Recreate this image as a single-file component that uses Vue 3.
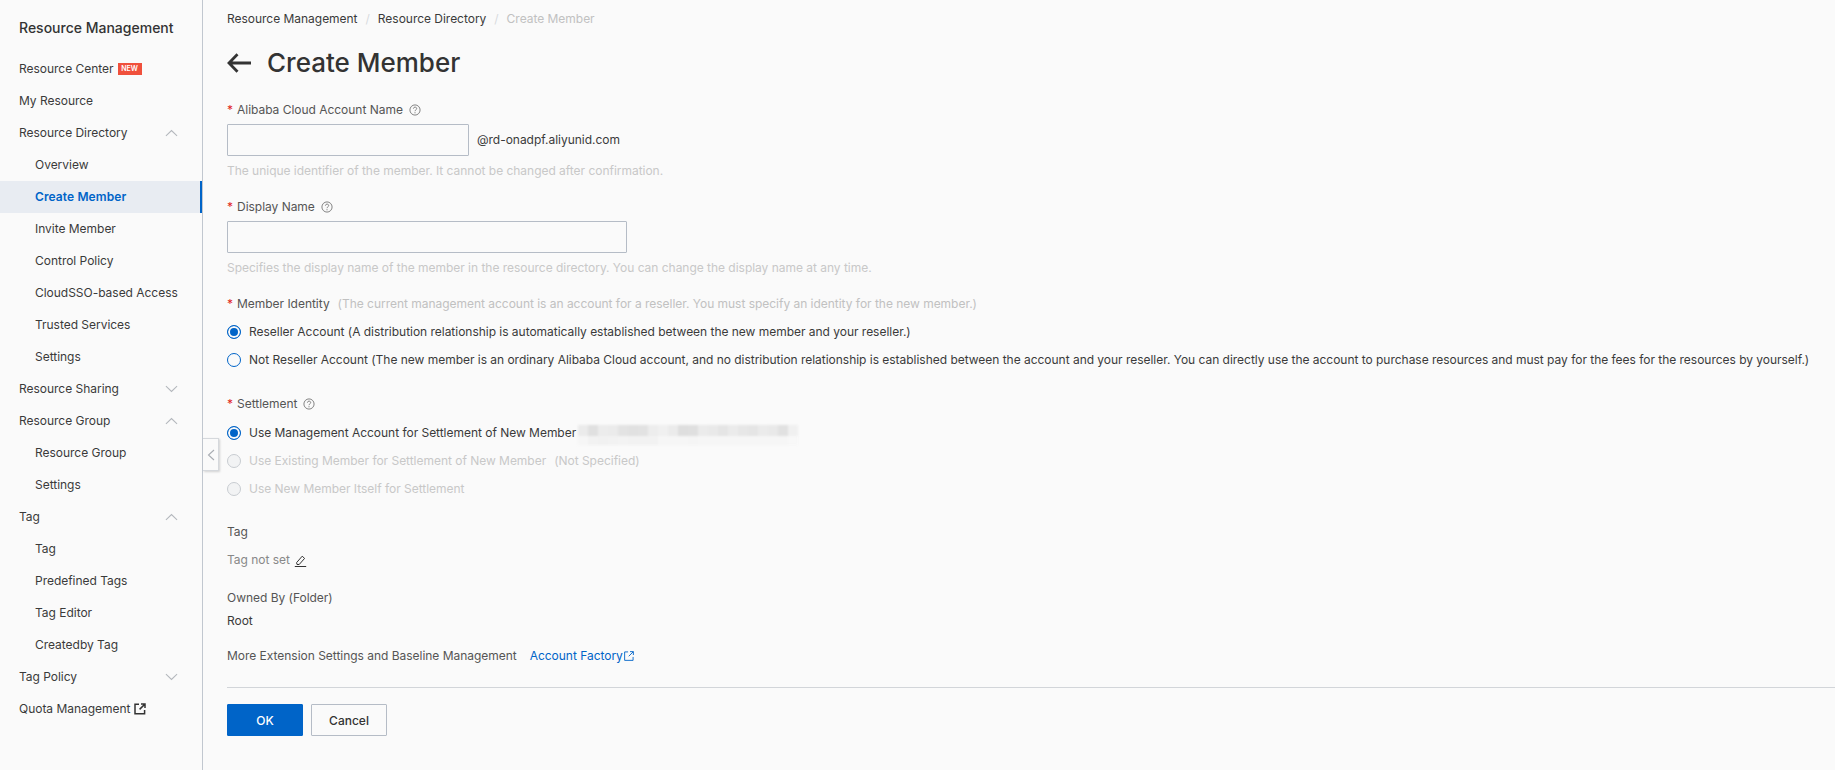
<template>
  <div class="page">
    <aside class="sidebar">
      <h2 class="side-title">Resource Management</h2>
      <nav class="menu">
        <a
          v-for="item in menu"
          :key="item.key"
          class="menu-item"
          :class="{ child: item.child, active: item.active }"
        >
          <span class="menu-text">{{ item.label }}</span>
          <em v-if="item.badge" class="badge">NEW</em>
          <svg v-if="item.external" class="side-ext" viewBox="0 0 12 12" width="12" height="12" fill="none" stroke="#333" stroke-width="1.5">
            <path d="M5 1.2H1v9.6h9.6V7" />
            <path d="M7 1h4v4M11 1L5.6 6.4" />
          </svg>
          <svg v-if="item.arrow" class="chevron" viewBox="0 0 14 8" width="13" height="8" fill="none" stroke="#b4b8bd" stroke-width="1.2">
            <path :d="item.arrow === 'up' ? 'M1 7l6-5.6L13 7' : 'M1 1l6 5.6L13 1'" />
          </svg>
        </a>
      </nav>
      <button class="collapse" type="button" aria-label="Collapse">
        <svg viewBox="0 0 8 12" width="8" height="12" fill="none" stroke="#a8acb2" stroke-width="1.1">
          <path d="M7 1L1.5 6 7 11" />
        </svg>
      </button>
    </aside>

    <main class="main">
      <div class="crumbs">
        <span>Resource Management</span>
        <i>/</i>
        <span>Resource Directory</span>
        <i>/</i>
        <span class="current">Create Member</span>
      </div>

      <div class="heading">
        <svg viewBox="0 0 24 20" width="24" height="20" fill="none" stroke="#333" stroke-width="2.8">
          <path d="M10.5 1.2L2 10l8.5 8.8M2.4 10H24" />
        </svg>
        <h1>Create Member</h1>
      </div>

      <section class="field field-account">
        <label class="label"><b>*</b>Alibaba Cloud Account Name<svg class="help" viewBox="0 0 12 12" width="12" height="12"><circle cx="6" cy="6" r="5.1" /><path d="M4.4 4.7c0-2.1 3.3-2.1 3.3-.1 0 1.2-1.7 1.3-1.7 2.6" /><path d="M6 8.2v1.1" /></svg></label>
        <div class="inline">
          <input class="input input-short" type="text" />
          <span class="suffix">@rd-onadpf.aliyunid.com</span>
        </div>
        <p class="hint">The unique identifier of the member. It cannot be changed after confirmation.</p>
      </section>

      <section class="field field-display">
        <label class="label"><b>*</b>Display Name<svg class="help" viewBox="0 0 12 12" width="12" height="12"><circle cx="6" cy="6" r="5.1" /><path d="M4.4 4.7c0-2.1 3.3-2.1 3.3-.1 0 1.2-1.7 1.3-1.7 2.6" /><path d="M6 8.2v1.1" /></svg></label>
        <input class="input input-long" type="text" />
        <p class="hint">Specifies the display name of the member in the resource directory. You can change the display name at any time.</p>
      </section>

      <section class="field field-identity">
        <label class="label"><b>*</b>Member Identity<span class="label-note">(The current management account is an account for a reseller. You must specify an identity for the new member.)</span></label>
        <div class="radios">
          <div class="radio checked"><span class="dot"></span>Reseller Account (A distribution relationship is automatically established between the new member and your reseller.)</div>
          <div class="radio"><span class="dot"></span>Not Reseller Account (The new member is an ordinary Alibaba Cloud account, and no distribution relationship is established between the account and your reseller. You can directly use the account to purchase resources and must pay for the fees for the resources by yourself.)</div>
        </div>
      </section>

      <section class="field field-settlement">
        <label class="label"><b>*</b>Settlement<svg class="help" viewBox="0 0 12 12" width="12" height="12"><circle cx="6" cy="6" r="5.1" /><path d="M4.4 4.7c0-2.1 3.3-2.1 3.3-.1 0 1.2-1.7 1.3-1.7 2.6" /><path d="M6 8.2v1.1" /></svg></label>
        <div class="radios radios-settlement">
          <div class="radio checked">
            <span class="dot"></span>Use Management Account for Settlement of New Member
            <span class="redacted">
              <span class="band band-top">
                <i v-for="(shade, n) in topBand" :key="n" :style="{ background: shade }"></i>
              </span>
              <span class="band band-bottom">
                <i v-for="(shade, n) in bottomBand" :key="n" :style="{ background: shade }"></i>
              </span>
            </span>
          </div>
          <div class="radio disabled"><span class="dot"></span>Use Existing Member for Settlement of New Member<span class="not-set">(Not Specified)</span></div>
          <div class="radio disabled"><span class="dot"></span>Use New Member Itself for Settlement</div>
        </div>
      </section>

      <section class="plain tag-block">
        <div class="plain-label">Tag</div>
        <div class="tag-empty">Tag not set
          <svg viewBox="0 0 13 13" width="13" height="13" fill="none" stroke="#333" stroke-width="1">
            <path d="M2.6 8.6L8.2 2.2l2.4 2.2-5.4 6.1H3z" />
            <path d="M.8 12.5h11.4" />
          </svg>
        </div>
      </section>

      <section class="plain owner-block">
        <div class="plain-label">Owned By (Folder)</div>
        <div class="plain-value">Root</div>
      </section>

      <section class="plain more-block">
        <span class="plain-label">More Extension Settings and Baseline Management</span>
        <a class="link">Account Factory<svg viewBox="0 0 11 11" width="10" height="10" fill="none" stroke="#0064c8" stroke-width="1"><path d="M4.5 1H.7v9.3H10V6.5" /><path d="M6.6.7h3.7v3.7M10.2.8L5.2 5.8" /></svg></a>
      </section>

      <footer class="actions">
        <button class="btn primary" type="button">OK</button>
        <button class="btn" type="button">Cancel</button>
      </footer>
    </main>
  </div>
</template>

<script setup>
const menu = [
  { key: 'center', label: 'Resource Center', badge: true },
  { key: 'mine', label: 'My Resource' },
  { key: 'dir', label: 'Resource Directory', arrow: 'up' },
  { key: 'overview', label: 'Overview', child: true },
  { key: 'create', label: 'Create Member', child: true, active: true },
  { key: 'invite', label: 'Invite Member', child: true },
  { key: 'policy', label: 'Control Policy', child: true },
  { key: 'sso', label: 'CloudSSO-based Access', child: true },
  { key: 'trusted', label: 'Trusted Services', child: true },
  { key: 'dirset', label: 'Settings', child: true },
  { key: 'share', label: 'Resource Sharing', arrow: 'down' },
  { key: 'group', label: 'Resource Group', arrow: 'up' },
  { key: 'groupitem', label: 'Resource Group', child: true },
  { key: 'groupset', label: 'Settings', child: true },
  { key: 'tag', label: 'Tag', arrow: 'up' },
  { key: 'tagitem', label: 'Tag', child: true },
  { key: 'predefined', label: 'Predefined Tags', child: true },
  { key: 'editor', label: 'Tag Editor', child: true },
  { key: 'createdby', label: 'Createdby Tag', child: true },
  { key: 'tagpolicy', label: 'Tag Policy', arrow: 'down' },
  { key: 'quota', label: 'Quota Management', external: true }
]

// the account id is blurred out in the original, these are its smeared cells
const topBand = [
  '#ebebeb', '#e0e0e0', '#ececec', '#ebebeb', '#e3e3e3', '#e1e1e1', '#e2e2e2', '#ededed',
  '#f0f0f0', '#ebebeb', '#dedede', '#dfdfdf', '#ebebeb', '#e9e9e9', '#e5e5e5', '#ebebeb',
  '#e7e7e7', '#e5e5e5', '#ebebeb', '#e9e9e9', '#e1e1e1', '#f0f0f0'
]
const bottomBand = [
  '#f5f5f5', '#f1f1f1', '#f0f0f0', '#f1f1f1', '#f2f2f2', '#f1f1f1', '#f1f1f1', '#f1f1f1',
  '#f6f6f6', '#f5f5f5', '#f5f5f5', '#f4f4f4', '#f5f5f5', '#f5f5f5', '#f5f5f5', '#f5f5f5',
  '#f5f5f5', '#f5f5f5', '#f5f5f5', '#f5f5f5', '#f6f6f6', '#f8f8f8'
]
</script>

<style>
html,
body {
  margin: 0;
  background: #fafafa;
}
</style>

<style scoped>
.page {
  display: flex;
  height: 770px;
  overflow: hidden;
  background: #fafafa;
  color: #3a3a3a;
  font-family: Inter, "Liberation Sans", sans-serif;
  font-size: 12px;
  line-height: 18px;
  letter-spacing: -0.025px;
}

.sidebar {
  position: relative;
  flex: 0 0 202px;
  box-sizing: content-box;
  border-right: 1px solid #c1c7cf;
}

.side-title {
  margin: 0;
  padding: 19px 0 0 19px;
  height: 34px;
  font-size: 14px;
  line-height: 18px;
  font-weight: 500;
  letter-spacing: 0;
  color: #333;
}

.menu-item {
  display: flex;
  align-items: center;
  height: 32px;
  padding-left: 19px;
  padding-right: 24px;
}

.menu-text {
  white-space: nowrap;
}

.menu-item.child {
  padding-left: 35px;
}

.menu-item.active {
  padding-right: 22px;
  background: #e8ecf2;
  border-right: 2px solid #0064c8;
  color: #0064c8;
  font-weight: 600;
  letter-spacing: 0.1px;
}

.badge {
  margin-left: 4px;
  width: 24px;
  height: 12px;
  background: #f0503c;
  color: #fff;
  font-size: 7px;
  font-style: normal;
  font-weight: 600;
  line-height: 12px;
  text-align: center;
}

.side-ext {
  margin-left: 4px;
}

.chevron {
  margin-left: auto;
}

.collapse {
  position: absolute;
  top: 438px;
  left: 203px;
  display: grid;
  place-items: center;
  width: 16px;
  height: 33px;
  padding: 0;
  background: #fafafa;
  border: 1px solid #d5d8dc;
  border-left: 0;
  box-shadow: 1px 1px 2px rgba(0, 0, 0, 0.16);
}

.main {
  flex: 1;
  min-width: 0;
  padding: 10px 0 0 24px;
}

.crumbs {
  display: flex;
  align-items: center;
  height: 18px;
}

.crumbs i {
  margin: 0 8px;
  color: #d8dade;
  font-style: normal;
}

.crumbs .current {
  color: #c1c1c1;
}

.heading {
  display: flex;
  align-items: center;
  gap: 16px;
  height: 40px;
  margin-top: 15px;
}

.heading h1 {
  margin: 0;
  font-size: 26px;
  line-height: 40px;
  font-weight: 500;
  letter-spacing: 0;
  color: #333;
}

.label {
  display: flex;
  align-items: center;
  height: 18px;
  color: #555;
}

.label b {
  width: 10px;
  color: #e1251b;
  font-weight: 400;
}

.help {
  margin-left: 6px;
  fill: none;
  stroke: #666;
  stroke-width: 0.8;
}

.label-note {
  margin-left: 8px;
  color: #c1c1c1;
}

.field-account {
  margin-top: 18px;
}

.field-display {
  margin-top: 18px;
}

.field-identity {
  margin-top: 18px;
}

.field-settlement {
  margin-top: 21px;
}

.inline {
  display: flex;
  align-items: center;
  gap: 8px;
}

.input {
  display: block;
  box-sizing: border-box;
  height: 32px;
  margin: 5px 0 0;
  padding: 0 8px;
  background: transparent;
  border: 1px solid #b5bcc6;
  border-radius: 1px;
}

.suffix {
  margin-top: 5px;
}

.input-short {
  width: 242px;
}

.input-long {
  width: 400px;
}

.hint {
  margin: 6px 0 0;
  color: #c8c8c8;
}

.radios {
  margin-top: 5px;
}

.radios-settlement {
  margin-top: 6px;
}

.radio {
  display: flex;
  align-items: center;
  height: 28px;
  white-space: nowrap;
}

.dot {
  flex: none;
  box-sizing: border-box;
  width: 14px;
  height: 14px;
  margin-right: 8px;
  border: 1px solid #0064c8;
  border-radius: 50%;
}

.radio.checked .dot {
  background: #0064c8;
  box-shadow: inset 0 0 0 2px #fafafa;
}

.radio.disabled {
  color: #c8c8c8;
}

.radio.disabled .dot {
  border-color: #c8ccd1;
  background: #f2f3f4;
}

.not-set {
  margin-left: 8px;
}

.redacted {
  display: block;
  flex: none;
  width: 220px;
  margin: 4px 0 0 2px;
  filter: blur(0.8px);
}

.band {
  display: flex;
  width: 100%;
}

.band i {
  flex: 1;
}

.band-top {
  height: 11px;
}

.band-bottom {
  height: 9px;
  opacity: 0.9;
}

.plain-label {
  color: #555;
}

.tag-block {
  margin-top: 20px;
}

.tag-empty {
  display: flex;
  align-items: center;
  gap: 4px;
  margin-top: 10px;
  color: #888;
}

.owner-block {
  margin-top: 20px;
}

.plain-value {
  margin-top: 5px;
}

.more-block {
  display: flex;
  margin-top: 17px;
}

.link {
  display: flex;
  align-items: center;
  gap: 1px;
  margin-left: 13px;
  color: #0064c8;
}

.actions {
  display: flex;
  gap: 8px;
  height: 32px;
  margin-top: 22px;
  padding-top: 16px;
  border-top: 1px solid #d2d5d9;
}

.btn {
  box-sizing: border-box;
  width: 76px;
  height: 32px;
  padding: 0;
  background: transparent;
  border: 1px solid #b5bcc6;
  border-radius: 1px;
  color: #333;
  font: 500 12px Inter, "Liberation Sans", sans-serif;
}

.btn.primary {
  background: #0064c8;
  border-color: #0064c8;
  color: #fff;
}
</style>
